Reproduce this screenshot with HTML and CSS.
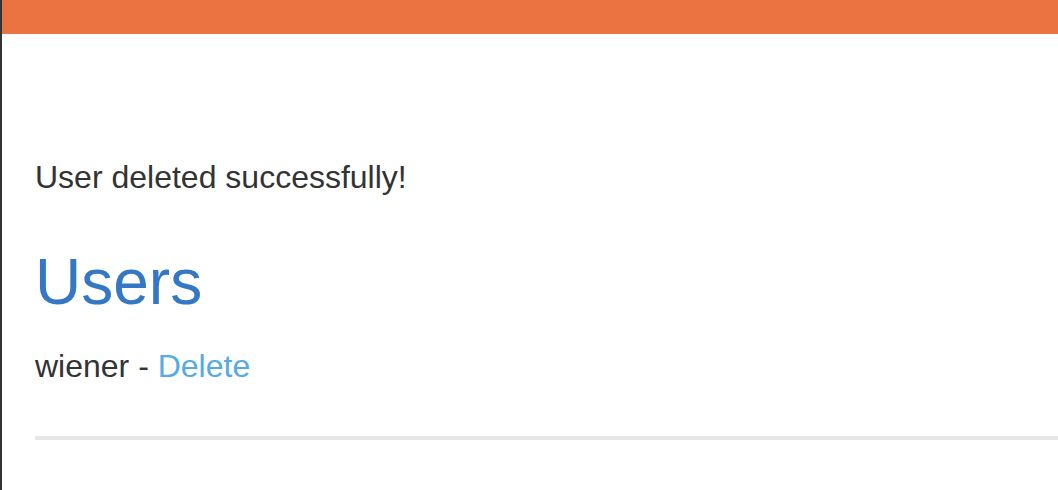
FILE: index.html
```html
<!DOCTYPE html>
<html>
<head>
<meta charset="utf-8">
<link rel="stylesheet" href="styles.css">
</head>
<body>
<div class="frame">
  <header class="lab-header"></header>
  <main class="content">
    <p class="message">User deleted successfully!</p>
    <h1 class="title">Users</h1>
    <div class="user-row">wiener - <a class="delete-link" href="#">Delete</a></div>
    <hr class="divider">
  </main>
</div>
</body>
</html>
```
FILE: styles.css
```css
html, body {
  margin: 0;
  padding: 0;
  background: #ffffff;
}
body {
  font-family: "Liberation Sans", Arial, sans-serif;
  color: #333333;
  overflow: hidden;
}
.frame {
  border-left: 2px solid #333333;
  min-height: 490px;
  box-sizing: border-box;
}
.lab-header {
  height: 34px;
  background: #eb7241;
}
.content {
  display: flex;
  flex-direction: column;
  padding-left: 33px;
}
.message {
  font-size: 32px;
  line-height: 37px;
  margin: 125px 0 0 0;
}
.title {
  font-size: 64px;
  font-weight: normal;
  line-height: 74px;
  color: #3478c5;
  margin: 49px 0 0 0;
}
.user-row {
  font-size: 32px;
  line-height: 37px;
  margin-top: 29px;
}
.delete-link {
  color: #56aae6;
  text-decoration: none;
}
.divider {
  border: none;
  height: 4px;
  background: #e6e6e6;
  margin: 51px 0 0 0;
}
```
